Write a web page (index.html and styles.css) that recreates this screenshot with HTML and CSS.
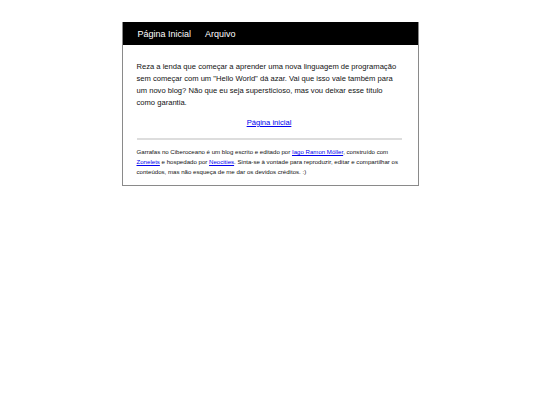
FILE: index.html
```html
<!DOCTYPE html>
<html lang="pt">
<head>
<meta charset="utf-8">
<title>Garrafas no Ciberoceano</title>
<link rel="stylesheet" href="styles.css">
</head>
<body>
<div class="page">
  <header class="topbar">
    <nav class="nav">
      <a href="#" class="nav-link">Página Inicial</a>
      <a href="#" class="nav-link">Arquivo</a>
    </nav>
  </header>
  <main class="content">
    <p class="post">Reza a lenda que começar a aprender uma nova linguagem de programação sem começar com um "Hello World" dá azar. Vai que isso vale também para um novo blog? Não que eu seja supersticioso, mas vou deixar esse título como garantia.</p>
    <p class="home"><a href="#">Página inicial</a></p>
    <hr class="rule">
    <footer class="footer">Garrafas no Ciberoceano é um blog escrito e editado por <a href="#">Iago Ramon Möller</a>, construído com <a href="#">Zonelets</a> e hospedado por <a href="#">Neocities</a>. Sinta-se à vontade para reproduzir, editar e compartilhar os conteúdos, mas não esqueça de me dar os devidos créditos. :)</footer>
  </main>
</div>
</body>
</html>
```
FILE: styles.css
```css
html, body {
  margin: 0;
  padding: 0;
  background: #ffffff;
}
body {
  font-family: "Liberation Sans", Arial, sans-serif;
  color: #111;
}
.page {
  width: 297px;
  box-sizing: border-box;
  margin: 22px auto 0;
  border: 1px solid #8a8a8a;
  border-top: none;
}
.topbar {
  background: #000;
  height: 23px;
  padding: 0 15px;
  display: flex;
  align-items: center;
}
.nav {
  display: flex;
  gap: 14px;
}
.nav-link {
  color: #fff;
  text-decoration: none;
  font-size: 9px;
  line-height: 12px;
}
.content {
  padding: 16px 16px 8px 14px;
}
.post {
  margin: 0;
  font-size: 7.6px;
  line-height: 12px;
}
.home {
  margin: 8px 0 0;
  text-align: center;
  font-size: 7.6px;
  line-height: 12px;
}
a {
  color: #0000ee;
}
.rule {
  border: none;
  border-top: 2px solid #dddddd;
  margin: 9px 0 7px;
  height: 0;
}
.footer {
  font-size: 6.1px;
  line-height: 10px;
}
```
